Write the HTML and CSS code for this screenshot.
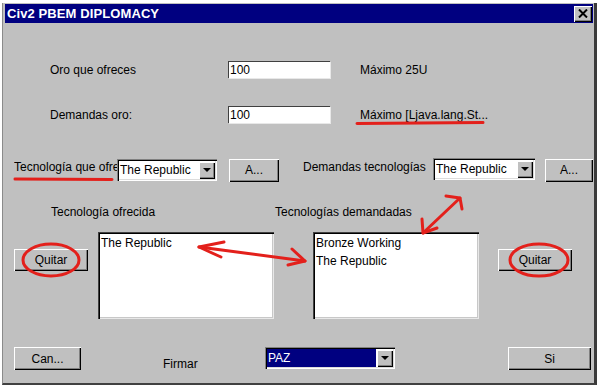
FILE: index.html
```html
<!DOCTYPE html>
<html lang="es">
<head>
  <meta charset="UTF-8" />
  <title>Civ2 PBEM DIPLOMACY</title>
  <link rel="stylesheet" href="styles.css">
</head>
<body>
  <div class="window">
    <div class="titlebar">
      <span class="title">Civ2 PBEM DIPLOMACY</span>
      <span class="close">
        <svg width="10" height="9" viewBox="0 0 10 9"><path d="M1 0.5 L9 8.5 M9 0.5 L1 8.5" stroke="#000" stroke-width="2"/></svg>
      </span>
    </div>

    <div class="row row-gold">
      <span class="lbl-gold">Oro que ofreces</span>
      <input class="field" type="text" value="100" />
      <span class="note">Máximo 25U</span>
    </div>

    <div class="row row-gold row-gold2">
      <span class="lbl-gold">Demandas oro:</span>
      <input class="field" type="text" value="100" />
      <span class="note">Máximo [Ljava.lang.St...</span>
    </div>

    <div class="row row-tech">
      <span class="lbl-tech">Tecnología que ofrece</span>
      <div class="select sel-offer">
        <span class="value">The Republic</span>
        <span class="arrow"><i></i></span>
      </div>
      <button class="btn btn-a">A...</button>
      <span class="lbl-tech lbl-tech2">Demandas tecnologías</span>
      <div class="select sel-demand">
        <span class="value">The Republic</span>
        <span class="arrow"><i></i></span>
      </div>
      <button class="btn btn-a btn-a2">A...</button>
    </div>

    <div class="row row-heads">
      <span class="head1">Tecnología ofrecida</span>
      <span>Tecnologías demandadas</span>
    </div>

    <div class="row row-lists">
      <button class="btn btn-quit">Quitar</button>
      <div class="listbox list1">
        <div>The Republic</div>
      </div>
      <div class="listbox list2">
        <div>Bronze Working</div>
        <div>The Republic</div>
      </div>
      <button class="btn btn-quit btn-quit2">Quitar</button>
    </div>

    <div class="row row-bottom">
      <button class="btn btn-can">Can...</button>
      <span class="firmar">Firmar</span>
      <div class="select sel-paz">
        <span class="value">PAZ</span>
        <span class="arrow"><i></i></span>
      </div>
      <button class="btn btn-si">Si</button>
    </div>

    <!-- anotaciones a mano encima del dialogo -->
    <svg class="marks" width="597" height="387" viewBox="0 0 597 387">
      <g fill="none" stroke="#e3201b" stroke-width="3" stroke-linecap="round" stroke-linejoin="round">
        <path d="M357 123.5 L483 122.5" />
        <path d="M15 179 L112 179.5" />
        <ellipse cx="51" cy="260" rx="28" ry="16" />
        <ellipse cx="539" cy="260" rx="29" ry="16" />
        <path d="M199 247 L305 261" />
        <path d="M224 242 L199 247 L221 257" />
        <path d="M292 249 L305 261 L288 265" />
        <path d="M423 233 L460 198" />
        <path d="M422 219 L423 233 L437 228" />
        <path d="M446 196 L460 198 L462 209" />
      </g>
    </svg>
  </div>
</body>
</html>
```

FILE: styles.css
```css
body {
  margin: 0;
  background: #fff;
  font-family: "Liberation Sans", Arial, sans-serif;
  font-size: 12px;
  color: #000;
}
.window {
  position: relative;
  box-sizing: border-box;
  width: 595px;
  height: 382px;
  margin: 3px 0 0 2px;
  padding: 1px 1px 0 2px;
  background: #c0c0c0;
  border-left: 1px solid #8a8a8a;
  border-right: 3px solid #3a3a3a;
  border-bottom: 2px solid #404040;
  overflow: hidden;
}
.titlebar {
  height: 19px;
  background: #000080;
  display: flex;
  align-items: center;
  justify-content: space-between;
  padding: 0 1px 0 2px;
}
.title {
  color: #fff;
  font-weight: bold;
  font-size: 13px;
  letter-spacing: 0.1px;
}
.close {
  box-sizing: border-box;
  width: 18px;
  height: 16px;
  background: #c0c0c0;
  display: flex;
  align-items: center;
  justify-content: center;
  box-shadow: inset 1px 1px 0 #fff, inset -1px -1px 0 #000, inset -2px -2px 0 #808080;
}
.row {
  display: flex;
  align-items: center;
}
.row-gold {
  margin-top: 38px;
  padding-left: 45px;
  height: 17px;
}
.row-gold2 {
  margin-top: 28px;
}
.lbl-gold {
  width: 178px;
}
.field {
  box-sizing: border-box;
  width: 102px;
  height: 17px;
  margin: 0;
  padding: 0 0 0 2px;
  border: none;
  background: #fff;
  font-family: "Liberation Sans", Arial, sans-serif;
  font-size: 12px;
  box-shadow: inset 1px 1px 0 #404040, 1px 1px 0 #e8e8e8;
}
.note {
  margin-left: 30px;
}
.row-tech {
  margin-top: 35px;
  height: 24px;
  padding-left: 9px;
}
.lbl-tech {
  width: 103px;
  overflow: hidden;
  white-space: nowrap;
  padding-bottom: 6px;
}
.lbl-tech2 {
  width: 130px;
  margin-left: 24px;
}
.select {
  box-sizing: border-box;
  height: 22px;
  display: flex;
  align-items: center;
  background: #fff;
  padding: 2px;
  box-shadow: inset 1px 1px 0 #808080, inset 2px 2px 0 #000, inset -1px -1px 0 #fff, inset -2px -2px 0 #dcdcdc;
}
.select .value {
  flex: 1;
  padding-left: 1px;
  white-space: nowrap;
  overflow: hidden;
}
.select .arrow {
  box-sizing: border-box;
  width: 16px;
  height: 17px;
  background: #c0c0c0;
  display: flex;
  align-items: center;
  justify-content: center;
  box-shadow: inset 1px 1px 0 #fff, inset -1px -1px 0 #000, inset -2px -2px 0 #808080;
}
.select .arrow i {
  width: 0;
  height: 0;
  border-left: 4px solid transparent;
  border-right: 4px solid transparent;
  border-top: 4px solid #000;
}
.sel-offer {
  width: 100px;
}
.sel-demand {
  width: 102px;
  margin-bottom: 2px;
}
.btn {
  box-sizing: border-box;
  margin: 0;
  padding: 0;
  border: none;
  background: #c0c0c0;
  font-family: "Liberation Sans", Arial, sans-serif;
  font-size: 12px;
  color: #000;
  box-shadow: inset 1px 1px 0 #fff, inset -1px -1px 0 #000, inset -2px -2px 0 #808080;
}
.btn-a {
  width: 50px;
  height: 23px;
  margin-left: 12px;
}
.btn-a2 {
  width: 48px;
  margin-left: 10px;
}
.row-heads {
  margin-top: 23px;
  padding-left: 46px;
  height: 14px;
}
.head1 {
  width: 224px;
}
.row-lists {
  margin-top: 13px;
  height: 87px;
  padding-left: 9px;
  align-items: flex-start;
}
.btn-quit {
  width: 74px;
  height: 22px;
  margin-top: 17px;
}
.btn-quit2 {
  margin-left: 19px;
}
.listbox {
  box-sizing: border-box;
  height: 87px;
  background: #fff;
  padding: 2px 2px 0 3px;
  line-height: 18px;
  box-shadow: inset 1px 1px 0 #404040, inset 2px 2px 0 #000, inset -1px -1px 0 #e8e8e8, inset -2px -2px 0 #c8c8c8;
}
.list1 {
  width: 176px;
  margin-left: 10px;
}
.list2 {
  width: 166px;
  margin-left: 39px;
}
.row-bottom {
  margin-top: 28px;
  height: 23px;
  padding-left: 9px;
}
.btn-can {
  width: 67px;
  height: 23px;
}
.firmar {
  width: 102px;
  margin-left: 82px;
  padding-top: 11px;
}
.sel-paz {
  width: 130px;
  margin-bottom: 1px;
}
.sel-paz .value {
  align-self: stretch;
  display: flex;
  align-items: center;
  background: #000080;
  color: #fff;
  margin-right: 1px;
}
.btn-si {
  width: 83px;
  height: 23px;
  margin-left: 113px;
}
.marks {
  position: absolute;
  left: -3px;
  top: -3px;
  pointer-events: none;
}
```
